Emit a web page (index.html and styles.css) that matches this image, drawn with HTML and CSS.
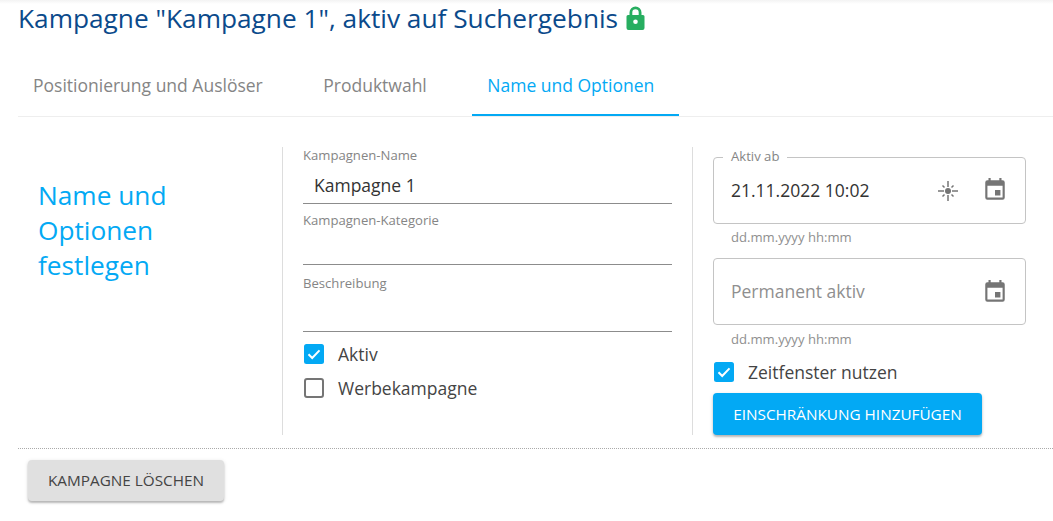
FILE: index.html
```html
<!DOCTYPE html>
<html lang="de">
<head>
<meta charset="utf-8">
<title>Kampagne</title>
<link rel="stylesheet" href="styles.css">
</head>
<body>
<div class="topshade"></div>
<main class="page">
  <h1 class="title">Kampagne "Kampagne 1", aktiv auf Suchergebnis
    <svg class="lock" viewBox="0 0 20 24" aria-hidden="true"><path fill="#27ae60" d="M4 9V6.500a6 6 0 0 1 12 0V9h1.500A1.500 1.500 0 0 1 19 10.500V22a2 2 0 0 1-2 2H3a2 2 0 0 1-2-2V10.500A1.500 1.500 0 0 1 2.500 9zm2.800 0h6.400V6.500a3.200 3.200 0 0 0-6.400 0zM10 13.500a2.300 2.300 0 1 0 0 4.600 2.300 2.300 0 0 0 0-4.600z"/></svg>
  </h1>
  <nav class="tabs">
    <a class="tab">Positionierung und Auslöser</a>
    <a class="tab">Produktwahl</a>
    <a class="tab active">Name und Optionen</a>
  </nav>
  <section class="columns">
    <div class="col-intro"><h2 class="intro">Name und Optionen festlegen</h2></div>
    <div class="col-fields">
      <div class="field f-name"><label class="flabel">Kampagnen-Name</label><div class="fvalue">Kampagne 1</div></div>
      <div class="field f-cat"><label class="flabel">Kampagnen-Kategorie</label></div>
      <div class="field f-desc"><label class="flabel">Beschreibung</label></div>
      <div class="check first"><svg class="box" viewBox="0 0 20 20"><rect width="20" height="20" rx="2.500" fill="#03a9f4"/><path d="M4.500 10.300l3.700 3.700 7.300-7.600" fill="none" stroke="#fff" stroke-width="2"/></svg><span>Aktiv</span></div>
      <div class="check"><svg class="box" viewBox="0 0 20 20"><rect x="1" y="1" width="18" height="18" rx="2" fill="none" stroke="#757575" stroke-width="2"/></svg><span>Werbekampagne</span></div>
    </div>
    <div class="col-dates">
      <div class="outlined has-legend">
        <span class="legend">Aktiv ab</span>
        <span class="dvalue">21.11.2022 10:02</span>
        <svg class="ico sun" viewBox="0 0 24 24"><circle cx="12" cy="12" r="3" fill="#757575"/><path d="M12 2v6M12 16v6M2 12h6M16 12h6M6.500 6.500l2 2M15.500 15.500l2 2M6.500 17.500l2-2M15.500 8.500l2-2" stroke="#757575" stroke-width="1.500" fill="none"/></svg>
        <svg class="ico cal" viewBox="0 0 24 24"><path fill="#757575" d="M17 12h-5v5h5v-5zM16 1v2H8V1H6v2H5a2 2 0 0 0-2 2v14a2 2 0 0 0 2 2h14a2 2 0 0 0 2-2V5a2 2 0 0 0-2-2h-1V1h-2zm3 18H5V8h14v11z"/></svg>
      </div>
      <div class="hint">dd.mm.yyyy hh:mm</div>
      <div class="outlined second">
        <span class="dplaceholder">Permanent aktiv</span>
        <svg class="ico cal" viewBox="0 0 24 24"><path fill="#757575" d="M17 12h-5v5h5v-5zM16 1v2H8V1H6v2H5a2 2 0 0 0-2 2v14a2 2 0 0 0 2 2h14a2 2 0 0 0 2-2V5a2 2 0 0 0-2-2h-1V1h-2zm3 18H5V8h14v11z"/></svg>
      </div>
      <div class="hint">dd.mm.yyyy hh:mm</div>
      <div class="check window"><svg class="box" viewBox="0 0 20 20"><rect width="20" height="20" rx="2.500" fill="#03a9f4"/><path d="M4.500 10.300l3.700 3.700 7.300-7.600" fill="none" stroke="#fff" stroke-width="2"/></svg><span>Zeitfenster nutzen</span></div>
      <button class="btn primary">EINSCHRÄNKUNG HINZUFÜGEN</button>
    </div>
  </section>
  <footer class="footer"><button class="btn neutral">KAMPAGNE LÖSCHEN</button></footer>
</main>
</body>
</html>
```
FILE: styles.css
```css
* { box-sizing: border-box; }
html, body { margin: 0; height: 100%; background: #fff; overflow: hidden; }
body { font-family: "Open Sans", sans-serif; color: #333; }
.topshade { height: 4px; background: linear-gradient(#f3f3f3, #fff); margin-bottom: -4px; }
.page { padding-left: 18px; }
.title { margin: 0; font-size: 26.25px; line-height: 36px; font-weight: 400; color: #0b4a8b; display: flex; align-items: center; }
.lock { width: 21px; height: 24px; margin-left: 7px; flex: none; }
.tabs { display: flex; margin-top: 19px; height: 62px; border-bottom: 1px solid #eee; }
.tab { display: block; height: 61px; padding: 0 25px 0 15px; margin-right: 20.5px; font-size: 17.5px; line-height: 61px; color: #858585; white-space: nowrap; }
.tab.active { color: #03a9f4; border-bottom: 2px solid #03a9f4; }
.columns { display: grid; grid-template-columns: 265px 410px 1fr; margin-top: 30px; height: 288px; }
.col-intro { border-right: 1px solid #ddd; padding: 31px 20px; }
.intro { margin: 0; font-size: 26.25px; line-height: 35px; font-weight: 400; color: #03a9f4; width: 150px; }
.col-fields { border-right: 1px solid #ddd; padding-left: 20px; padding-right: 20px; }
.field { border-bottom: 1px solid #8c8c8c; width: 369px; }
.flabel { display: block; font-size: 13.125px; line-height: 16px; color: #858585; }
.f-name { height: 57px; }
.f-cat { height: 53px; margin-top: 8px; }
.f-desc { height: 57px; margin-top: 10px; }
.fvalue { font-size: 17.5px; line-height: 24px; padding: 10px 0 0 11px; color: #333; }
.check { display: flex; align-items: center; font-size: 17.5px; line-height: 24px; color: #444; height: 34px; padding-left: 1px; }
.check span { margin-left: 14px; }
.check.first { margin-top: 5px; }
.box { width: 20px; height: 20px; flex: none; }
.col-dates { padding-left: 20px; }
.outlined { position: relative; display: flex; align-items: center; width: 313px; height: 67px; border: 1px solid #c4c4c4; border-radius: 4px; padding: 0 17px 0 17px; margin-top: 10px; }
.second { margin-top: 13px; }
.legend { position: absolute; top: -10px; left: 9px; padding: 0 8px; background: #fff; font-size: 13.125px; line-height: 16px; color: #858585; }
.dvalue { font-size: 17.5px; color: #333; flex: 1; position: relative; top: -1px; }
.dplaceholder { font-size: 17.5px; color: #8f8f8f; flex: 1; position: relative; top: -1px; }
.ico { width: 26px; height: 26px; flex: none; }
.has-legend .cal { position: relative; top: -1px; }
.sun { margin-right: 22px; width: 24px; height: 24px; }
.hint { font-size: 13.125px; line-height: 16px; color: #8f8f8f; padding-left: 18px; margin-top: 6px; }
.has-legend + .hint { margin-top: 5px; }
.btn { display: block; border: 0; border-radius: 4px; font-family: inherit; font-size: 15.3px; font-weight: 400; box-shadow: 0 2px 2px rgba(0,0,0,.22), 0 1px 4px rgba(0,0,0,.12); }
.window { margin-top: 9px; height: 32px; }
.primary { margin-top: 5px; width: 269px; height: 42px; background: #03a9f4; color: #fff; font-weight: 500; }
.footer { margin-top: 13px; border-top: 1px dotted #aaa; padding: 11px 0 0 10px; }
.neutral { width: 196px; height: 41px; padding-bottom: 2px; background: #e0e0e0; color: #444; }
```
